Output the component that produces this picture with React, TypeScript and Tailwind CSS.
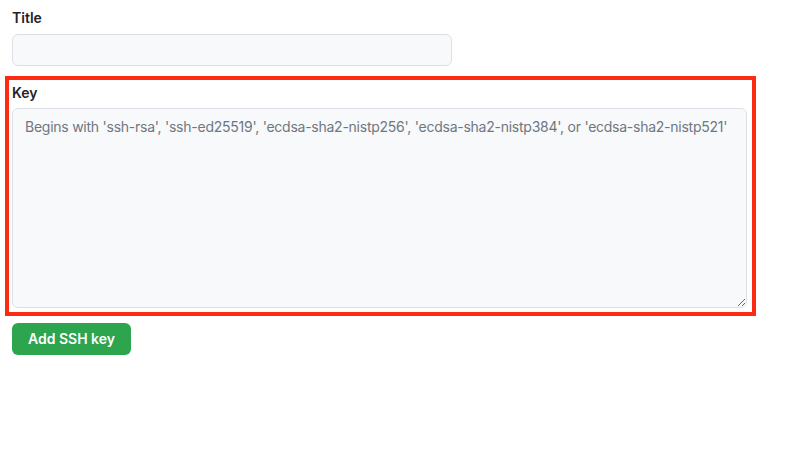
import React from 'react';

const App: React.FC = () => {
  return (
    <div className="min-h-screen bg-white px-3 pt-2 text-[#1f2328]" style={{ fontFamily: 'Inter, "Noto Sans", sans-serif' }}>
      <form className="flex flex-col" onSubmit={e => e.preventDefault()}>
        <label htmlFor="title" className="block text-sm font-semibold leading-5 mb-[6px]">Title</label>
        <input
          id="title"
          type="text"
          className="w-[440px] h-8 rounded-md border border-[#dde1e6] bg-[#f8f9fb] px-3 text-sm outline-none"
        />

        {/* highlighted key section */}
        <div className="mt-[10px] -ml-[7px] w-[751px] border-4 border-[#fb2a10] pl-[3px] pt-[3px] pb-[4px]">
          <label htmlFor="key" className="block text-sm font-semibold leading-5 mb-[5px]">Key</label>
          <textarea
            id="key"
            placeholder="Begins with 'ssh-rsa', 'ssh-ed25519', 'ecdsa-sha2-nistp256', 'ecdsa-sha2-nistp384', or 'ecdsa-sha2-nistp521'"
            className="block w-[735px] h-[200px] rounded-md border border-[#dde1e6] bg-[#f8f9fb] px-3 py-2 text-sm leading-5 tracking-[-0.25px] outline-none placeholder:text-[#6e7781]"
          />
        </div>

        <div className="mt-[7px]">
          <button
            type="submit"
            className="h-8 w-[119px] rounded-md bg-[#2da44e] text-sm font-semibold text-white"
          >
            Add SSH key
          </button>
        </div>
      </form>
    </div>
  );
};

export default App;
